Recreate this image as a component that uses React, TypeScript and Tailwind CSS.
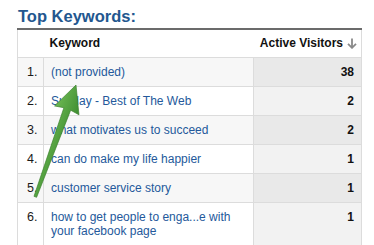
const rows = [
  { n: "1.", keyword: "(not provided)", visitors: 38 },
  { n: "2.", keyword: "Sunday - Best of The Web", visitors: 2 },
  { n: "3.", keyword: "what motivates us to succeed", visitors: 2 },
  { n: "4.", keyword: "can do make my life happier", visitors: 1 },
  { n: "5.", keyword: "customer service story", visitors: 1 },
  { n: "6.", keyword: "how to get people to enga...e with|your facebook page", visitors: 1 },
]

const SortArrow = () => (
  <svg width="10" height="11" viewBox="0 0 10 11" className="inline-block ml-[4px] -mt-[2px] align-middle">
    <path d="M5 0.5 V9.5 M1 5.8 L5 9.8 L9 5.8" stroke="#8a8a8a" strokeWidth="1.8" fill="none" />
  </svg>
)

// big green pointer drawn over the table
const Pointer = () => (
  <svg className="absolute left-0 top-0 pointer-events-none" width="374" height="245" viewBox="0 0 374 245">
    <defs>
      <linearGradient id="arrowFill" x1="0" y1="0" x2="1" y2="0">
        <stop offset="0" stopColor="#6cb852" />
        <stop offset="1" stopColor="#3e8d30" />
      </linearGradient>
    </defs>
    <g transform="translate(76 85) rotate(20)">
      <path
        d="M0 0 L13 27 L3.6 25.5 L1.4 119 L-1.4 119 L-3.6 25.5 L-13 27 Z"
        fill="url(#arrowFill)"
        stroke="#3a7f2c"
        strokeWidth="0.6"
        strokeLinejoin="round"
      />
    </g>
  </svg>
)

const App = () => {
  return (
    <div className="relative w-[374px] h-[245px] overflow-hidden bg-white font-['Liberation_Sans',Arial,sans-serif]">
      <div className="pl-[17px] pt-[6px]">
        <h2 className="text-[16.5px] leading-[20px] font-bold text-[#23578f] pl-[1px] mb-[2px]">Top Keywords:</h2>

        <table className="w-[344px] border-collapse table-fixed border-t-2 border-t-[#6b6b6b]">
          <colgroup>
            <col className="w-[26px]" />
            <col className="w-[210px]" />
            <col className="w-[108px]" />
          </colgroup>
          <thead>
            <tr className="h-[28px] text-[12px] font-bold text-[#111]">
              <th className="border-x border-b border-[#dcdcdc] border-r-0 bg-white"></th>
              <th className="border-b border-[#dcdcdc] text-left pl-[6px] bg-white">Keyword</th>
              <th className="border-r border-b border-[#dcdcdc] text-right pr-[4px] bg-white whitespace-nowrap">
                Active Visitors
                <SortArrow />
              </th>
            </tr>
          </thead>
          <tbody>
            {rows.map((r, i) => {
              const odd = i % 2 === 0
              return (
                <tr key={r.n} className="text-[12px] leading-[14px] align-top">
                  <td className={`border border-[#dcdcdc] pl-[9px] py-[7px] text-[12.5px] text-[#1a1a1a] ${odd ? "bg-[#f7f7f7]" : "bg-white"}`}>
                    {r.n}
                  </td>
                  <td className={`border border-[#dcdcdc] pl-[7px] py-[7px] text-[#24599b] ${odd ? "bg-[#f7f7f7]" : "bg-white"}`}>
                    {r.keyword.split("|").map((line, k) => (
                      <div key={k}>{line}</div>
                    ))}
                  </td>
                  <td className={`border border-[#dcdcdc] pr-[7px] py-[7px] text-right font-bold text-[#111] ${odd ? "bg-[#e9e9e9]" : "bg-[#f2f2f2]"}`}>
                    {r.visitors}
                  </td>
                </tr>
              )
            })}
          </tbody>
        </table>
      </div>
      <Pointer />
    </div>
  )
}

export default App
